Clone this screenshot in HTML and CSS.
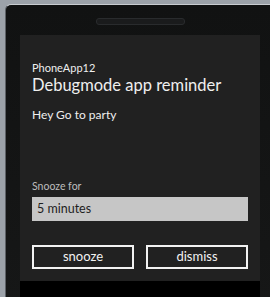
FILE: index.html
```html
<!DOCTYPE html>
<html>
 <head>
  <meta charset="utf-8">
  <title>PhoneApp12</title>
  <link rel="stylesheet" href="styles.css">
 </head>
 <body>
  <div class="phone">
   <div class="top">
    <div class="speaker"></div>
   </div>
   <div class="screen">
    <div class="dialog">
     <div class="app_name">PhoneApp12</div>
     <div class="title">Debugmode app reminder</div>
     <div class="content">Hey Go to party</div>
     <div class="snooze_label">Snooze for</div>
     <div class="picker">5 minutes</div>
     <div class="buttons">
      <button class="button">snooze</button>
      <button class="button">dismiss</button>
     </div>
    </div>
   </div>
  </div>
 </body>
</html>
```

FILE: styles.css
```css
html, body {
  margin:0;
  height:100%;
  overflow:hidden;
}

body {
  background-color:#9ca2a9;
  font-family:"Lato", "Noto Sans", sans-serif;
}

.phone {
  margin-left:5px;
  margin-top:4px;
  width:265px;
  height:300px;
  background:linear-gradient(#111212, #161717);
  border-top:1px solid #c9cdd1;
  border-left:1px solid #5d6166;
  border-top-left-radius:6px;
}

.top {
  height:30px;
  display:flex;
  justify-content:flex-start;
  padding-left:90px;
  padding-top:13px;
  box-sizing:border-box;
}

.speaker {
  width:87px;
  height:5px;
  border-radius:3px;
  background-color:#1a1b1c;
  border:1px solid #292b2d;
}

.screen {
  margin-left:14px;
  width:240px;
  height:270px;
  background-color:#000;
}

.dialog {
  background-color:#212121;
  padding:25px 12px 0 12px;
  height:246px;
  box-sizing:border-box;
  color:#efefef;
}

.app_name {
  font-size:11px;
  line-height:15px;
}

.title {
  font-size:16.5px;
  line-height:20px;
}

.content {
  font-size:12px;
  line-height:16px;
  margin-top:12px;
}

.snooze_label {
  font-size:10.5px;
  line-height:14px;
  color:#bdbdbd;
  margin-top:56px;
}

.picker {
  margin-top:4px;
  height:24px;
  background-color:#c6c6c6;
  color:#1e1e1e;
  font-size:12.5px;
  line-height:24px;
  padding-left:5px;
}

.buttons {
  display:flex;
  gap:12px;
  margin-top:24px;
}

.button {
  flex:1;
  height:24px;
  border:2px solid #f2f2f2;
  background-color:transparent;
  color:#f2f2f2;
  font-family:inherit;
  font-size:13px;
  padding:0 0 2px 0;
}
```
